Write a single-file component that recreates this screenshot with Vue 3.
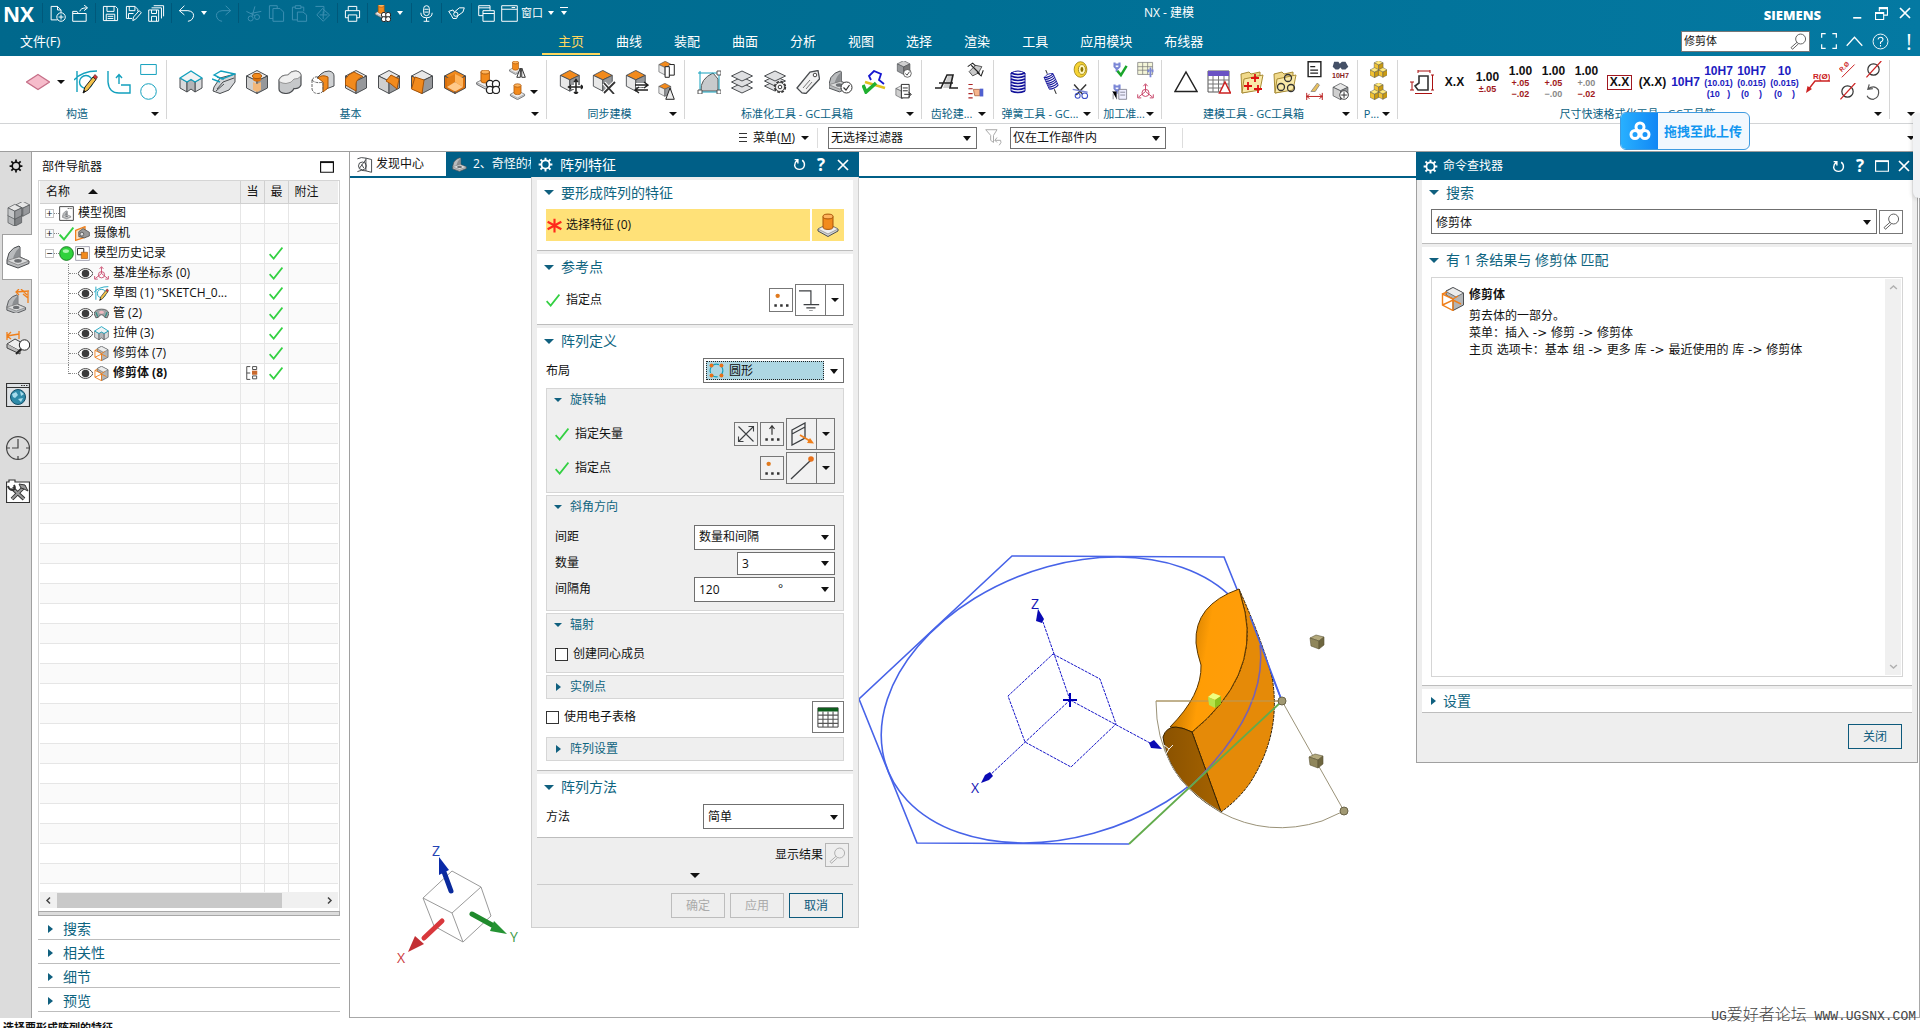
<script setup>
import { h, ref } from 'vue'

const cube = (t, l, r) =>
  `<g stroke="#4a4d50" stroke-width="1" stroke-linejoin="round"><path fill="${t}" d="M12 .5 22.500 6 12 11 1.500 6z"/><path fill="${l}" d="M1.500 6 12 11V23.500L1.500 18z"/><path fill="${r}" d="M22.500 6 12 11V23.500L22.500 18z"/></g>`
const at = (s, x, y, k) => `<g transform="translate(${x} ${y}) scale(${k})">${s}</g>`
const W = '#e8e8e8', L = '#cfcfcf', D = '#96989b', O = '#f28a1c', OD = '#d96f0c'
const orangeTop = cube(O, W, D)
const knob = `<path fill="#d4d5d7" stroke="#4a4d50" d="M12 11 22 16V18L12 23.500 2 18V16z"/><path fill="#eeeeee" stroke="#777" stroke-width=".6" d="M12 11 22 16 12 21 2 16z"/><path fill="${O}" stroke="#a75408" d="M7 3.500V14a5 2.400 0 0 0 10 0V3.500z"/><ellipse cx="12" cy="3.500" rx="5" ry="2.400" fill="#ffb45c" stroke="#a75408"/>`
const rings = (c = '#222', f = '#fff') => `<g fill="${f}" stroke="${c}" stroke-width="1.300"><circle cx="14" cy="14" r="3.600"/><circle cx="20" cy="14" r="3.600"/><circle cx="14" cy="20" r="3.600"/><circle cx="20" cy="20" r="3.600"/></g>`
const pencil = `<path d="M9 23 11 17 19 7 22 9.500 14 20z" fill="#f2c14a" stroke="#222"/><path d="M19 7 21 4.500 23.500 7 22 9.500z" fill="#d33" stroke="#222" stroke-width=".6"/><path d="M9 23 10.200 20 12 21.500z" fill="#111"/>`
const okBadge = `<circle cx="17.500" cy="17.500" r="5.500" fill="#fff" stroke="#333"/><path d="M14.500 17.500 17 20 20.500 15" fill="none" stroke="#333" stroke-width="1.200"/>`
const bracket = `<path fill="#b9bbbd" stroke="#4a4d50" stroke-linejoin="round" d="M1 15 3 8Q7 2 13 1L14 2V12L23 16V18.500L12 23 1 19z"/><path fill="#8b8e91" d="M13.500 2.500V12L7 14.500Q8 7 13.500 2.500z"/><path fill="#dadbdc" stroke="#666" stroke-width=".6" d="M1 15.500 13 12 23 16 12 20z"/><ellipse cx="12" cy="15.800" rx="3.800" ry="1.900" fill="#6d7073"/>`
const stack3 = y => `<path d="M12 ${y} 22.500 ${y + 5} 12 ${y + 10} 1.500 ${y + 5}z" fill="#dfe0e2" stroke="#4a4d50"/>`
const spring = '<g fill="none" stroke="#12129a" stroke-width="1.700">' + [3, 6, 9, 12, 15, 18, 21].map(y => `<path d="M5 ${y}Q12 ${y + 3} 19 ${y}"/>`).join('') + '<path d="M5 3Q12 -1 19 3M5 3V21M19 3V21" stroke-width="1"/></g>'
const cyan = 'fill="none" stroke="#12a0bd" stroke-width="1.400"'
const wire = 'fill="none" stroke="#fff" stroke-width="1.400"'
const dimw = 'fill="none" stroke="#3d90b2" stroke-width="1.400"'
const line = 'fill="none" stroke="#3c3f42" stroke-width="1.300"'
const triad = `<g fill="none" stroke="#c9486b" stroke-width="1.400"><path d="M12 12V2M9 4.500 12 1 15 4.500M12 12 2 20M12 12 22 20M1 16V21H6M23 16V21H18"/><circle cx="12" cy="14" r="5"/></g>`
const trim = `<path d="M12 .5 22.500 6V18L12 23.500V12L5 8V4z" fill="#b3b5b7" stroke="#4a4d50"/><path d="M12 .5 22.500 6 15 10 5 4.500z" fill="#ececec" stroke="#4a4d50" stroke-width=".7"/><path d="M1.500 7 12 12V23.500L1.500 18zM1.500 18 12 13 20 17M12 12 17 9M1.500 7 6 5" fill="none" stroke="#f07f1a" stroke-width="1.400"/>`
const mag = (c = '#555') => `<g fill="none" stroke="${c}" stroke-width="1.300"><circle cx="15" cy="8.500" r="7"/><path d="M10 13 1.500 20.500 3.500 23 12 15.200"/></g>`
const folder = '<path d="M1 4 9 2 11 4 20 2V19L2 23z" fill="#f0d98a" stroke="#a98c36"/><path d="M4 9 23 5 20 20 2 23z" fill="#f9e9a8" stroke="#a98c36"/>'
const yellow = cube('#ffe97a', '#f1c232', '#c99a12')
const clamp = '<path d="M5 2V8L8 11V15M12 2V8L9 11M5 5H12" fill="none" stroke="#7a86d6" stroke-width="3"/>'
const extr = `<path fill="#d9dadc" stroke="#4a4d50" stroke-linejoin="round" d="M1 8 8 12V22L1 18zM23 8 16 12V22L23 18z"/><path fill="#b2b4b7" stroke="#4a4d50" stroke-linejoin="round" d="M8 12 12 9.500 16 12V22L12 19 8 22z"/><path fill="#f2f3f4" stroke="#12a0bd" stroke-width="1.400" stroke-linejoin="round" d="M1 8 12 1 23 8 16 12 12 9.500 8 12z"/>`

const icons = {
  newf: `<path ${wire} d="M12 21H3V2H12L17 7V11M12 2V7H17"/><circle ${wire} cx="17" cy="17" r="6"/><path ${wire} d="M17 13.500V20.500M13.500 17H20.500"/>`,
  open: `<path ${wire} d="M1 9V23H20V12H1M1 9H7L9 12M11 9Q12 4 21 4M17 0 22 4 17 8"/>`,
  save: `<path ${wire} d="M2 2H19L22 5V22H2zM7 2V9H17V2M6 22V13H18V22M8 16H16M8 19H16"/>`,
  saveas: `<path ${wire} d="M2 2H14L18 6V9M2 2V19H10M6 2V8H14V2M5 19V12H12M11 22 12 17 20 8 23 11 15 20z"/>`,
  saveall: `<path ${wire} d="M1 7H15V23H1zM5 7V12H12V7M5 23V16H12V23M5 4H19V19M8 1H22V16"/>`,
  undo: `<path ${wire} stroke-width="2" d="M9 1 2 8 9 14M2 8H14Q22 9 22 15 21 22 14 23"/>`,
  redo: `<path ${dimw} d="M15 1 22 8 15 14M22 8H10Q2 9 2 15 3 22 10 23"/>`,
  cut: `<g ${dimw}><circle cx="8" cy="19" r="3.500"/><circle cx="17" cy="17" r="3.500"/><path d="M10 16 14 2M14 15 2 9M23 9 8 12"/></g>`,
  copy: `<path ${dimw} d="M2 1H13V5M2 1V19H7M7 5H17L22 10V23H7z"/>`,
  paste: `<path ${dimw} d="M6 3H2V21H9M14 3H18V9M6 1H14V5H6zM9 10H17L22 14V23H9z"/>`,
  target: `<path ${dimw} d="M2 2H14V12M12 5 22 14 13 23 4 14zM13 9V20M8 14H19"/>`,
  print: `<path ${wire} stroke-width="2" d="M6 8V2H18V8M2 8H22V18H18M6 18H2V8M6 14H18V23H6z"/>`,
  pattern: at(knob, 0, -2, 0.85) + rings('#111'),
  mic: `<rect ${wire} x="8" y="1" width="8" height="14" rx="4"/><path ${wire} d="M4 11Q4 18 12 18 20 18 20 11M12 18V23M8 23H16M9 6H15M9 10H15"/>`,
  spray: `<path d="M1 9 7 7 9 10 16 4 23 4 21 10 14 15 12 19 7 19 5 15z" ${wire}/><circle cx="11" cy="13" r="3" ${wire}/>`,
  cascade: `<path ${wire} d="M1 1H17V7M1 1V15H7M1 4H17M7 8H23V23H7zM7 12H23"/>`,
  window: `<path ${wire} d="M1 1H23V23H1zM1 6H23M15 3.500H20"/>`,
  plane: '<path d="M12 4.500 23.500 12 12 19.500 .5 12z" fill="#f6bccb" stroke="#c66f88" stroke-width="1.200"/>',
  sketch: `<path ${cyan} d="M3 1V22M0 10Q8 1 23 1"/><circle ${cyan} cx="12" cy="12" r="6.500"/>${pencil}`,
  path: `<path ${cyan} d="M1 1V12Q2 23 12 23H23V15H14M12 14V5M9 8 12 4.500 15 8"/>`,
  rect: `<path ${cyan} d="M1 5H23V19H1z"/>`,
  circle: `<circle ${cyan} cx="12" cy="12" r="11"/>`,
  extrude: extr,
  revolve: `<path d="M2 17 8 8 23 4V12L17 20 8 23.500 1 21z" fill="#d3d5d8" stroke="#4a4d50"/><path d="M5 19 11 12 22 8M4 21 12 14" stroke="#4a4d50" fill="none"/><path ${cyan} d="M2 5 9 1 23 4 10 9zM0 9 8 12M5 7 12 9"/>`,
  hole: cube(W, L, D) + `<path d="M8 6V9.500a4 2 0 0 0 8 0V6" fill="${OD}"/><ellipse cx="12" cy="6" rx="4.500" ry="2.600" fill="${O}" stroke="#a75408"/><path d="M8 12 12 14 16 12V20L12 22 8 20z" fill="#f2b77a"/>`,
  unite: '<path d="M10 5Q13 1 18 1 23 2 23 6V15Q21 19 16 18.500 14 23 8 23.500 1 23 1 19V10Q3 5 10 5z" fill="#c6c8ca" stroke="#4a4d50" stroke-width="1.200"/><path d="M10 5Q13 1 18 1 23 2 23 6 20 9.500 16 9 14 13 8 13.500 1 13 1 10 3 5 10 5z" fill="#f0f0f0" stroke="#777" stroke-width=".7"/>',
  subtract: `<path d="M10 4Q13 1 18 1 23 2 23 6V16L15 19V10L6 8z" fill="#cfd1d3" stroke="#4a4d50"/><path d="M7 8Q11 4 17 7V18L12 22V12z" fill="${O}" stroke="#a75408"/><path d="M1 10V19Q2 23.500 7 23.500 12 23 12 20V12M1 10Q3 6 8 7M1 10Q5 14 12 12" fill="none" stroke="#666" stroke-dasharray="3 1"/>`,
  edge: cube(W, L, D) + `<path d="M1.500 9Q4 4 10 2L19 6.500Q12 9 12 14V21L1.500 15z" fill="${O}" stroke="#a75408"/>`,
  chamfer: cube(W, L, D) + `<path d="M9 11 14 5 22 9 20 19 14 14z" fill="${O}" stroke="#a75408"/>`,
  draft: cube(W, O, D) + `<path d="M5 7 14 10 12 23.500 1.500 19z" fill="${O}" stroke="#a75408"/>`,
  shell: cube(O, OD, OD) + `<path d="M12 4 20 8V17L12 12z" fill="#ffb45c"/><path d="M12 4 4 8V17L12 12z" fill="#e27c14"/><path d="M12 12 20 17 12 21.500 4 17z" fill="#ffc98a"/>`,
  patfeat: at(knob, -1, -1, 0.85) + rings(),
  mirror: at(knob, -1, -1, 0.85) + '<path d="M16 10V23H11zM18 10V23H23z" fill="#fff" stroke="#222" stroke-width="1.300"/>',
  knob,
  moveface: at(orangeTop, 0, 0, 0.9) + '<path d="M17 10V24M10 17H24" stroke="#fff" stroke-width="4"/><path d="M17 10V24M10 17H24M15 12 17 9.500 19 12M15 22 17 24 19 22M12 15 9.500 17 12 19M22 15 24 17 22 19" stroke="#222" stroke-width="1.500" fill="none"/>',
  delface: at(orangeTop, 0, 0, 0.9) + '<path d="M12 13 22 24M23 12 12 23" stroke="#fff" stroke-width="4"/><path d="M12 13 22 24M23 12 12 23" stroke="#333" stroke-width="1.800" fill="none"/>',
  replace: at(orangeTop, 0, 0, 0.9) + '<path d="M11 15H22M11 20H22" stroke="#fff" stroke-width="4"/><path d="M10 15H22M19 12 23 15 19 18M23 20H11M14 17 10 20 14 23" stroke="#222" stroke-width="1.400" fill="none"/>',
  copyface: at(orangeTop, 0, 0, 0.85) + '<path d="M10 8H16V23H10zM16 5H23V20H16" fill="#fff" stroke="#222" stroke-width="1.400"/>',
  resize: at(orangeTop, 0, 0, 0.8) + '<path d="M17 7 23 23H11z" fill="#eee" stroke="#222" stroke-width="1.400"/>',
  std1: '<path d="M4 21Q3 9 16 3L21 9V21z" fill="#c8cacc" stroke="#555"/><path d="M1 3H22M3 1V22H22V3" stroke="#12a0bd" fill="none"/><path d="M1 20H5V24H1zM20 20H24V24H20zM20 1H24V5H20z" fill="#fff" stroke="#555"/>',
  layers: stack3(13) + stack3(7) + stack3(1),
  layerset: stack3(11) + stack3(6) + stack3(1) + '<circle cx="17" cy="17" r="5" fill="#eee" stroke="#333" stroke-width="2.400" stroke-dasharray="2.500 1.400"/><circle cx="17" cy="17" r="4.500" fill="#f4f4f4" stroke="#333" stroke-width=".8"/><circle cx="17" cy="17" r="1.800" fill="#fff" stroke="#333"/>',
  tag: '<path d="M1 18 14 2 22 .5 23.500 9 10 23.500 6 23z" fill="#f2f2f2" stroke="#4a4d50" stroke-width="1.300"/><circle cx="19" cy="5" r="1.800" fill="#fff" stroke="#444"/><path d="M7 18 14 10M10 19 16 12" stroke="#777"/>',
  partok: at(bracket, -1, 0, 0.95) + okBadge,
  stamp: '<path d="M9 10 7 6 12 1 19 4 17 10 22 14" fill="none" stroke="#1515d0" stroke-width="1.800"/><path d="M3 12 23 18" stroke="#e0c020" stroke-width="2.500"/><path d="M1 15 4 22 14 13" fill="none" stroke="#20b030" stroke-width="3.500"/>',
  modelok: at(cube(L, D, '#777'), 2, -1, 0.85) + okBadge,
  modelout: at(cube(W, L, D), 0, 3, 0.8) + '<path d="M9 2H20V21H9z" fill="#fff" stroke="#222" stroke-width="1.300"/><path d="M11 7H18M11 11H18M13 16H22M19 13 23 16 19 20" stroke="#222" fill="none" stroke-width="1.300"/>',
  gear: '<path d="M9 18 14 6H19L16 18z" fill="#ccc"/><path d="M1 18H7L13 5H19L16 18H24M5 13H19" fill="none" stroke="#222" stroke-width="1.600"/>',
  gearp: '<path d="M3 15 12 6 21 8 16 17 8 21z" fill="#c9c9c9" stroke="#222"/><path d="M1 8 8 3 12 7M14 16 20 21 23 13M6 6 18 18" fill="none" stroke="#222" stroke-width="1.500"/>',
  gearh: '<path d="M2 2H8M2 8H8M2 15H8M2 21H8" stroke="#a22" stroke-width="1.500"/><path d="M9 9H18V18H11z" fill="#f6b48c" stroke="#a0522d"/><path d="M18 8H23V19H18z" fill="#5060d0"/>',
  spring,
  springt: `<g transform="rotate(-24 12 12)">${at(spring, 4, 3, 0.7)}<path d="M12 3V-1M12 20V25" stroke="#333"/></g>`,
  coil: '<ellipse cx="12" cy="12" rx="9" ry="11" fill="#f6d335" stroke="#8c7200"/><ellipse cx="14" cy="12" rx="5" ry="7" fill="#fff7c0" stroke="#8c7200"/><ellipse cx="14" cy="12" rx="2" ry="3.500" fill="#8c7200"/>',
  scissors: '<path d="M3 2 15 16M20 2 6 17" stroke="#333" stroke-width="2"/><circle cx="18" cy="18" r="4" fill="none" stroke="#3d50c8" stroke-width="1.500"/><circle cx="8" cy="18" r="3.500" fill="none" stroke="#3d50c8" stroke-width="1.500"/><path d="M1 9 22 13" stroke="#7a86d6" stroke-width="2"/>',
  prep1: clamp + '<path d="M9 14 14 20 22 7" fill="none" stroke="#19a52a" stroke-width="3.500"/>',
  prep2: '<path d="M1 2H22V19H1zM1 8H22M1 13H22M8 2V19M15 2V19" fill="#f4f5d8" stroke="#777"/><path d="M16 12V16M19 9V23M22 12V16" stroke="#7a86d6" stroke-width="2.500"/>',
  prep3: clamp + '<path d="M11 9H22V23H11z" fill="#eef" stroke="#667"/><path d="M13 13H20M13 17H20M2 12H8V23M3 15V23" stroke="#667"/>',
  triad,
  tri: '<path d="M12 2 23 21.500H1z" fill="none" stroke="#222" stroke-width="1.500"/>',
  table: '<path d="M1 1H22V22H1z" fill="#fff" stroke="#555"/><path d="M1 1H22V6H1z" fill="#6a52c4"/><path d="M1 10H22M1 14H22M1 18H22M6 6V22M11.500 6V22M17 6V22" stroke="#777"/><path d="M18 12 23.500 23H12.500z" fill="#fff" stroke="#c22" stroke-width="1.500"/>',
  foldplus: folder + '<path d="M15 4V12M11 8H19M8 12V20M4 16H12M18 15V23M14 19H22" stroke="#d11" stroke-width="1.800"/>',
  foldring: folder + '<g fill="none" stroke="#333" stroke-width="1.300"><circle cx="15" cy="8" r="3.500"/><circle cx="8" cy="17" r="3.500"/><circle cx="18" cy="18" r="3.500"/></g>',
  note: '<path d="M3 1H21V22H3z" fill="#fff" stroke="#222" stroke-width="2"/><path d="M6 8H13M6 13H17M6 17H17" stroke="#222" stroke-width="1.800"/>',
  binoc: '<path d="M3 1H9L11 4 14 1H19L23 8 19 12H14L12 9 9 12H5L1 8z" fill="#445066"/><text x="0" y="24" font-family="Liberation Sans,sans-serif" font-size="10" font-weight="700" fill="#822">10H7</text>',
  brush: '<path d="M16 0 19 3 13 12H7z" fill="#e8c060" stroke="#777"/><path d="M1 14V24M23 14V24M1 19H23M5 16 1 19 5 22M19 16 23 19 19 22" stroke="#b22" fill="none" stroke-width="1.400"/>',
  cubeplus: cube(W, L, D) + '<circle cx="17" cy="17" r="6" fill="#fff" stroke="#333" stroke-width="1.300"/><path d="M17 13V21M13 17H21" stroke="#333" stroke-width="1.400"/>',
  ycubes: at(yellow, 5, -1, 0.6) + at(yellow, -1, 9, 0.62) + at(yellow, 11, 9, 0.6),
  dims: '<path d="M9 6H18V20H8L5 16 9 13z" fill="none" stroke="#333" stroke-width="1.600"/><path d="M8 1H20M8 -1V3M20 -1V3M22.500 5V20M21 5H24M21 20H24M2 12V20M0 12H4M0 20H4M5 23.500H22" stroke="#a11" fill="none"/>',
  leader: '<text x="7" y="9" font-family="Liberation Sans,sans-serif" font-size="8" font-weight="700" fill="#c22">R(Ø)</text><path d="M24 11H9L2 20" fill="none" stroke="#c22" stroke-width="1.400"/><path d="M0 23 1.500 16 6 19z" fill="#c22"/>',
  rleader: '<text transform="rotate(-45 9 15)" x="5" y="12" font-family="Liberation Sans,sans-serif" font-size="9" font-weight="700" fill="#c22">R.Ø</text><path d="M4 23 22 5" stroke="#c22" stroke-width="1.400"/>',
  dia: '<circle cx="12" cy="12" r="8" fill="none" stroke="#333" stroke-width="1.700"/><path d="M2 23 23 0" stroke="#c22" stroke-width="1.700"/>',
  undoc: '<path d="M6 2 4 9 11 8M4 8Q14 2 19 10 21 20 12 23 5 23 3 18" fill="none" stroke="#555" stroke-width="1.700"/>',
  funnel: '<path d="M1 1H17L12 9V19L8 16V9zM14 16H22Q24 19 20 23M17 12 14 16 17 19" fill="none" stroke="#aaa" stroke-width="1.400"/>',
  cog: '<circle cx="12" cy="12" r="6.500" fill="none" stroke="currentColor" stroke-width="2.800"/><path d="M12 1V5.500M12 18.500V23M1 12H5.500M18.500 12H23M4 4 7.500 7.500M16.500 16.500 20 20M20 4 16.500 7.500M4 20 7.500 16.500" stroke="currentColor" stroke-width="3"/>',
  asm: at(cube('#e6e6e6', '#c4c6c8', D), 9, -1, 0.65) + at(cube('#e0e0e0', '#b4b6b8', '#808285'), 1, 9, 0.65) + at(cube('#e6e6e6', '#c4c6c8', D), 1, 2, 0.65),
  bracket,
  pmi: at(bracket, 0, 5, 0.85) + '<path d="M10 3 23 2M13 0 10 3 13 6M22 2V14M17 5 22 9M15 0 21 6" stroke="#f07f1a" fill="none" stroke-width="1.300"/>',
  measure: '<path d="M1 13 9 8 22 15 14 20z" fill="#eee" stroke="#444"/><path d="M1 13V17L14 23V20" fill="#bbb" stroke="#444"/><path d="M1 9V1M1 5 13 3M5 1 1 5 5 8M13 0V8" stroke="#f07f1a" fill="none" stroke-width="1.300"/><circle cx="18.500" cy="14" r="5.200" fill="#fff" stroke="#222"/><path d="M15 18 10 23" stroke="#222" stroke-width="2"/>',
  web: '<path d="M.5 .5H23.500V23.500H.5z" fill="#dfe3e6" stroke="#333" stroke-width="1.200"/><path d="M1 4.500H23" stroke="#333"/><path d="M15 2.500H22" stroke="#333" stroke-dasharray="1.500 1"/><circle cx="12" cy="14" r="7.500" fill="#2e8aa8" stroke="#145069"/><path d="M6 11 10 9 12 12 9 15 7 14zM14 8 18 11 15 13zM12 16 17 15 15 19z" fill="#a8dcec"/>',
  clock: '<circle cx="12" cy="12" r="11.400" fill="none" stroke="#444" stroke-width="1.200"/><path d="M12 3V12H6M12 20V23M20 12H23M1 12H4" fill="none" stroke="#444" stroke-width="1.200"/>',
  tools: '<path d="M.5 3H3V1H9V3H23.500V23.500H.5z" fill="#fff" stroke="#333" stroke-width="1.200"/><path d="M6 9 18 20M18 8 6 20" stroke="#333" stroke-width="3.800"/><path d="M6 9 18 20M18 8 6 20" stroke="#999" stroke-width="1.800"/><path d="M13 5 19 6 22 12 18 10 15 9z" fill="#999" stroke="#333"/><path d="M2 7Q3 11 7 11 10 10 8 6" fill="none" stroke="#333" stroke-width="2"/>',
  mv: `<path d="M1 1H23V23H1z" fill="#fff" stroke="#333" stroke-width="1.400"/><path d="M14 4H21" stroke="#333" stroke-dasharray="1.500 1.500" stroke-width="1.500"/>${at(bracket, 5, 7, 0.6)}`,
  camera: '<path d="M1 7 16 1V18L1 23z" fill="#fbe1c4" stroke="#f07f1a" stroke-width="2"/><path d="M6 9 13 4 23 10V16L15 19 6 17z" fill="#999" stroke="#333"/><circle cx="11" cy="13" r="3" fill="#ddd" stroke="#333"/>',
  history: '<path d="M1 1H23V23H1z" fill="#fff" stroke="#889" stroke-width="1.200"/><path d="M4 4H14V14H4z" fill="#fff" stroke="#333" stroke-width="1.600"/><path d="M10 10H20V20H10z" fill="#f28a1c" stroke="#a75408"/>',
  ball: '<circle cx="12" cy="12" r="11" fill="#2fd23c" stroke="#147a1e" stroke-width="1.500"/><ellipse cx="11" cy="8" rx="5" ry="3" fill="#a9f5ad"/>',
  eye: '<path d="M0 12C5 1.500 19 1.500 24 12 19 22.500 5 22.500 0 12z" fill="#fff" stroke="#444" stroke-width="1.600"/><circle cx="12" cy="12" r="6" fill="#3b3b3b"/>',
  tube: '<path d="M0 12Q2 5 12 5 22 5 24 12L21 19Q16 19 15 15 12 13 9 15 8 19 3 19z" fill="#a0a4a6" stroke="#444" stroke-width="1.200"/><ellipse cx="12" cy="10" rx="4" ry="2.500" fill="#f0b9c0"/><path d="M3 10 6 17M21 10 18 17" stroke="#2f8f86" stroke-width="2"/>',
  trim,
  check: '<path d="M1 14 8 21.500 23 2.500" fill="none" stroke="#33d042" stroke-width="3"/>',
  cur: '<path d="M3 1H9M3 1V23H9M3 12H9M13 1H20V6H13zM13 17H20V22H13z" fill="none" stroke="#444" stroke-width="1.600"/><path d="M12 8H21V15H12z" fill="#c8682c"/>',
  disc: `<path ${line} d="M2 4Q7 1 14 3L22 5V23L14 21Q7 19 2 22M14 3V21"/><circle ${line} cx="9" cy="14" r="5.500"/><path ${line} d="M5 17 14 5M8 12 11 17"/>`,
  reset: '<path d="M3 3H9V10M17 4Q22 8 21 14 19 21 12 21 5 21 3 14 3 8 8 4" fill="none" stroke="currentColor" stroke-width="2.600"/>',
  star: '<path d="M12 1V23M1 6 23 18M23 6 1 18" stroke="#ff2a1c" stroke-width="3.400"/>',
  ptdots: '<circle cx="8" cy="7" r="2.600" fill="#e07a1e"/><path d="M4 17H7V20H4zM11 17H14V20H11zM18 17H21V20H18z" fill="#333"/>',
  vecdots: '<path d="M12 13V3M9 6 12 2 15 6" fill="none" stroke="#333" stroke-width="1.400"/><path d="M4 17H7V20H4zM11 17H14V20H11zM18 17H21V20H18z" fill="#333"/>',
  ground: `<path ${line} d="M0 2H13V17M5 17H22M8 20.500H18M11 24H15"/>`,
  flip: `<path ${line} d="M3 3 21 21M21 3 3 21M15 3H21V9M3 15V21H9"/>`,
  facevec: `<path ${line} d="M2 8 15 1V16L2 23zM2 12 15 5"/><path d="M10 13 20 19" stroke="#f07f1a" stroke-width="1.800"/><path d="M24 21.500 17 21 20 16z" fill="#f07f1a"/>`,
  endpt: `<path ${line} d="M1 23 21 4"/><circle cx="21" cy="3" r="2.800" fill="#e8711a"/>`,
  circ: '<circle cx="12" cy="12" r="9" fill="none" stroke="#12a0bd" stroke-width="1.600" stroke-dasharray="9 3"/><g fill="#e8711a"><circle cx="5" cy="5" r="2.800"/><circle cx="19" cy="5" r="2.800"/><circle cx="5" cy="19" r="2.800"/><circle cx="19" cy="19" r="2.800"/></g>',
  sheet: '<path d="M1 2H23V23H1z" fill="#fff" stroke="#333"/><path d="M1 2H23V6H1z" fill="#0d5c1c"/><path d="M1 10H23M1 14.500H23M1 19H23M6.500 6V23M12 6V23M17.500 6V23" stroke="#555" stroke-width="1.200"/>',
  mag: mag(),
  magoff: mag('#aaa'),
  help: '<circle cx="12" cy="12" r="10.500" fill="none" stroke="#fff" stroke-width="1.300"/><path d="M8.500 9Q9 6 12 6 15.500 6 15.500 9 15.500 11 12 13V15.500M12 17V19" fill="none" stroke="#fff" stroke-width="1.500"/>',
  full: '<path d="M1 7V1H7M17 1H23V7M23 17V23H17M7 23H1V17" fill="none" stroke="#fff" stroke-width="1.800"/>',
  up: '<path d="M1 18 12 6 23 18" fill="none" stroke="#fff" stroke-width="1.800"/>',
  min: '<path d="M4 20H19" stroke="#fff" stroke-width="3"/>',
  restore: '<path d="M1 10H16V23H1zM1 12H16M8 8V1H23V15H17M8 3H23" fill="none" stroke="#fff" stroke-width="2"/>',
  max: '<path d="M1 3H23V21H1z" fill="none" stroke="currentColor" stroke-width="2"/><path d="M1 4H23" stroke="currentColor" stroke-width="2.500"/>',
  close: '<path d="M2 2 22 22M22 2 2 22" fill="none" stroke="currentColor" stroke-width="3.400"/>',
  left: '<path d="M16 4 8 12 16 20" fill="none" stroke="#444" stroke-width="4"/>',
  right: '<path d="M8 4 16 12 8 20" fill="none" stroke="#444" stroke-width="4"/>',
  chevup: '<path d="M3 16 12 8 21 16" fill="none" stroke="#b0b0b0" stroke-width="4"/>',
  chevdn: '<path d="M3 8 12 16 21 8" fill="none" stroke="#b0b0b0" stroke-width="4"/>',
  cloud: '<g fill="none" stroke="#fff" stroke-width="3"><circle cx="12" cy="8" r="4"/><circle cx="7" cy="15.500" r="4"/><circle cx="17" cy="15.500" r="4"/></g>',
}

const Icon = p => h('svg', { viewBox: '0 0 24 24', width: p.s || 24, height: p.s || 24, innerHTML: icons[p.n], 'aria-hidden': 'true', class: 'icon' })
Icon.props = ['n', 's']

const quick = [
  ['newf', 'open'], ['save', 'saveas', 'saveall'], ['undo', '>', 'redo'],
  ['cut', 'copy', 'paste', 'target'], ['print'], ['pattern', '>'], ['mic'], ['spray'], ['cascade', 'window'],
]
const tabs = ['主页', '曲线', '装配', '曲面', '分析', '视图', '选择', '渲染', '工具', '应用模块', '布线器']
const i = (n, w = 33) => ({ n, w })
const st = (a, b, w = 26) => ({ st: [a, b], w })
const tx = (t, ...sub) => ({ t, sub, w: 33 })
const groups = [
  { label: '构造', w: 167, items: [{ w: 15 }, i('plane', 32), { caret: 1, w: 14 }, i('sketch', 36), i('path', 30), st('rect', 'circle', 28)] },
  { label: '基本', w: 380, items: [...['extrude', 'revolve', 'hole', 'unite', 'subtract', 'edge', 'chamfer', 'draft', 'shell', 'patfeat'].map(n => i(n)), st('mirror', 'knob'), { caret: 1, w: 8, low: 1 }] },
  { label: '同步建模', w: 138, items: [i('moveface'), i('delface'), i('replace'), st('copyface', 'resize')] },
  { label: '标准化工具 - GC工具箱', w: 237, items: [...['std1', 'layers', 'layerset', 'tag', 'partok', 'stamp'].map(n => i(n)), st('modelok', 'modelout')] },
  { label: '齿轮建...', w: 72, items: [i('gear'), st('gearp', 'gearh')] },
  { label: '弹簧工具 - GC...', w: 105, items: [i('spring'), i('springt'), st('coil', 'scissors')] },
  { label: '加工准...', w: 63, items: [st('prep1', 'prep3'), st('prep2', 'triad')] },
  { label: '建模工具 - GC工具箱', w: 196, items: [i('tri'), i('table'), i('foldplus'), i('foldring'), st('note', 'brush'), st('binoc', 'cubeplus')] },
  { label: 'P...', w: 40, items: [st('ycubes', 'ycubes')] },
  {
    label: '尺寸快速格式化工具 - GC工具箱', w: 492, items: [i('dims'),
      { t: 'X.X', w: 33, c: 'xx' },
      tx('1.00', ['r', '±.05']), tx('1.00', ['r', '+.05'], ['r', '−.02']), tx('1.00', ['r', '+.05'], ['g', '−.00']), tx('1.00', ['g', '+.00'], ['r', '−.02']),
      { t: 'X.X', w: 33, c: 'xx boxed' }, { t: '(X.X)', w: 33, c: 'xx' }, { t: '10H7', w: 33, c: 'blue' },
      { ...tx('10H7', ['b', '(10.01)'], ['b', '(10   )']), c: 'blue' }, { ...tx('10H7', ['b', '(0.015)'], ['b', '(0    )']), c: 'blue' }, { ...tx('10', ['b', '(0.015)'], ['b', '(0    )']), c: 'blue' },
      i('leader'), st('rleader', 'dia'), st('dia', 'undoc')],
  },
]
const rail = [['cog', 'r0'], ['asm', 'r1'], ['bracket', 'on'], ['pmi', 'r3'], ['measure', 'r4'], ['web', 'r5'], ['clock', 'r6'], ['tools', 'r7']]
const tree = [
  { top: '+', ic: ['mv'], t: '模型视图' },
  { top: '+', ic: ['check', 'camera'], t: '摄像机' },
  { top: '−', ic: ['ball', 'history'], t: '模型历史记录', ok: 1 },
  { ic: ['eye', 'triad'], t: '基准坐标系 (0)', ok: 1 },
  { ic: ['eye', 'sketch'], t: '草图 (1) "SKETCH_0...', ok: 1 },
  { ic: ['eye', 'tube'], t: '管 (2)', ok: 1 },
  { ic: ['eye', 'extrude'], t: '拉伸 (3)', ok: 1 },
  { ic: ['eye', 'trim'], t: '修剪体 (7)', ok: 1 },
  { ic: ['eye', 'trim'], t: '修剪体 (8)', ok: 1, last: 1 },
]
const blanks = 26
const drawers = ['搜索', '相关性', '细节', '预览']
const query = ref('修剪体')
const query2 = ref('修剪体')
const count = ref('3')
const angle = ref('120')
</script>

<template>
  <div class="app">
    <header class="top">
      <div class="titlebar">
        <span class="nx">NX</span>
        <template v-for="(g, gi) in quick" :key="gi">
          <i class="vsep"></i>
          <template v-for="n in g" :key="n">
            <i v-if="n === '>'" class="caret lite"></i>
            <button v-else class="qb" :aria-label="n"><Icon :n="n" s="17" /></button>
          </template>
        </template>
        <button class="win">窗口</button><i class="caret lite wide-l"></i><i class="caret lite bar"></i>
        <span class="apptitle">NX - 建模</span>
        <span class="siemens">SIEMENS</span>
        <button class="wb" aria-label="最小化"><Icon n="min" s="13" /></button>
        <button class="wb" aria-label="还原"><Icon n="restore" s="13" /></button>
        <button class="wb" aria-label="关闭"><Icon n="close" s="12" /></button>
      </div>
      <nav class="tabs">
        <a href="#" class="file">文件(F)</a>
        <a v-for="(t, k) in tabs" :key="t" href="#" class="tab" :class="{ on: k === 0 }">{{ t }}</a>
        <span class="grow"></span>
        <label class="find"><input v-model="query" aria-label="查找命令" /><Icon n="mag" s="17" /></label>
        <button class="tb" aria-label="全屏"><Icon n="full" s="16" /></button>
        <button class="tb" aria-label="收起"><Icon n="up" s="17" /></button>
        <button class="tb" aria-label="帮助"><Icon n="help" s="17" /></button>
        <button class="tb bang">!</button>
      </nav>
    </header>

    <section class="ribbon">
      <div v-for="g in groups" :key="g.label" class="group" :style="{ width: g.w + 'px' }">
        <div class="items">
          <div v-for="(it, k) in g.items" :key="k" class="cell" :style="{ width: it.w + 'px' }" :class="{ low: it.low }">
            <button v-if="it.n" class="plain" :aria-label="it.n"><Icon :n="it.n" /></button>
            <div v-else-if="it.st" class="stack">
              <button v-for="n in it.st" :key="n" class="plain small" :aria-label="n"><Icon :n="n" s="17" /></button>
            </div>
            <i v-else-if="it.caret" class="caret"></i>
            <button v-else-if="it.t" class="plain dim" :class="it.c">
              <b>{{ it.t }}</b><span v-for="(s, q) in it.sub" :key="q" :class="s[0]">{{ s[1] }}</span>
            </button>
          </div>
        </div>
        <div class="glabel"><span>{{ g.label }}</span><i class="caret"></i></div>
      </div>
      <div class="more"><i class="caret"></i></div>
    </section>

    <section class="selbar">
      <button class="menu"><span class="burger"></span>菜单(<u>M</u>)<i class="caret"></i></button>
      <i class="vline"></i>
      <span class="sel f1"><select aria-label="选择过滤器"><option>无选择过滤器</option></select></span>
      <Icon n="funnel" s="17" />
      <span class="sel f2"><select aria-label="选择范围"><option>仅在工作部件内</option></select></span>
      <i class="vline"></i>
      <span class="grow"></span><i class="caret"></i>
    </section>

    <main class="body">
      <aside class="rail">
        <button v-for="r in rail" :key="r[0]" :class="r[1]" :aria-label="r[0]"><Icon :n="r[0]" :s="r[0] === 'cog' ? 14 : 24" /></button>
      </aside>

      <aside class="nav">
        <div class="navhead"><h2>部件导航器</h2><button class="plain" aria-label="最大化"><Icon n="max" s="14" /></button></div>
        <div class="navbox">
          <div class="rows">
            <table>
              <colgroup><col /><col class="c2" /><col class="c2" /><col class="c4" /></colgroup>
              <thead><tr><th class="name">名称<i class="tri-up"></i></th><th>当</th><th>最</th><th>附注</th></tr></thead>
              <tbody>
                <tr v-for="r in tree" :key="r.t">
                  <td>
                    <div class="node" :class="{ last: r.last }">
                      <template v-if="r.top"><span class="pm">{{ r.top }}</span><span class="dots"></span></template>
                      <span v-else class="guide"></span>
                      <Icon v-for="n in r.ic" :key="n" :n="n" s="15" />
                      <span class="nt">{{ r.t }}</span>
                    </div>
                  </td>
                  <td class="mid"><Icon v-if="r.last" n="cur" s="14" /></td>
                  <td class="mid"><Icon v-if="r.ok" n="check" s="14" /></td>
                  <td></td>
                </tr>
                <tr v-for="n in blanks" :key="'b' + n"><td></td><td></td><td></td><td></td></tr>
              </tbody>
            </table>
          </div>
          <div class="hscroll"><Icon n="left" s="9" /><span class="thumb"></span><Icon n="right" s="9" /></div>
        </div>
        <div class="split"></div>
        <button v-for="d in drawers" :key="d" class="drawer"><i class="tr"></i>{{ d }}</button>
      </aside>

      <section class="work">
        <div class="doctabs">
          <button class="doc first"><Icon n="disc" s="17" />发现中心</button>
          <button class="doc second"><Icon n="bracket" s="15" />2、奇怪的材</button>
        </div>
        <svg class="scene" viewBox="350 178 1570 840" width="1570" height="840">
          <defs>
            <linearGradient id="tube" x1="0" x2="1" y1="0" y2="0.3"><stop offset="0" stop-color="#e08a00" /><stop offset=".25" stop-color="#c87800" /><stop offset=".55" stop-color="#ff9d05" /><stop offset="1" stop-color="#ff9d0a" /></linearGradient>
            <linearGradient id="cap" x1="0" x2="1"><stop offset="0" stop-color="#8a5200" /><stop offset="1" stop-color="#a66300" /></linearGradient>
          </defs>
          <g fill="none" stroke="#4763e8" stroke-width="1.600">
            <path d="M1129 844 917 843 859 699 1012 556 1224 557 1282 701" />
            <circle r=".866" transform="matrix(211.500 1 55.100 -165.100 1070.500 700)" vector-effect="non-scaling-stroke" />
          </g>
          <g fill="none" stroke="#1414c8" stroke-width="1" stroke-dasharray="3 1">
            <path d="M1070 700 1043 622M1070 700 988 777M1070 700 1150 743M1053 654 1100 679 1116 724 1071 767 1025 742 1008 696z" />
          </g>
          <path d="M1070 693V707M1063 700H1077" stroke="#0000b4" stroke-width="2" />
          <g fill="#0a0ab4"><path d="M1038 609 1044 619 1042 623 1036 621z" /><path d="M981 783 985 775 990 772 993 776 989 780z" /><path d="M1162 749 1151 748 1149 743 1154 740z" /></g>
          <g class="axis blue"><text x="1031" y="609">Z</text><text x="971" y="793">X</text></g>
          <path d="M1156 701H1282M1156 701Q1156 775 1220 812 1268 838 1322 821L1344 811 1282 701" fill="none" stroke="#9a9278" />
          <path d="M1239 589Q1262 640 1272 677 1282 733 1250 783 1238 800 1221 812L1192 732Q1258 678 1245 612z" fill="#e58a08" stroke="#2a1c08" stroke-width="1" stroke-dasharray="3 1" />
          <path d="M1239 589Q1194 605 1196 643 1197 653 1201 665 1202 695 1170 727L1182 728 1192 732Q1258 678 1245 612z" fill="url(#tube)" stroke="#5a3700" stroke-width="1" />
          <path d="M1163 737Q1166 727 1176 727 1184 728 1192 732L1221 812Q1168 782 1163 737z" fill="url(#cap)" stroke="#3a2400" stroke-width="1" />
          <path d="M1164 745Q1172 783 1221 812" fill="none" stroke="#b5b1a4" />
          <path d="M1260 645Q1268 712 1190 787" fill="none" stroke="#7a62b0" stroke-width="1.600" />
          <path d="M1250 616 1282 701" stroke="#4763e8" stroke-width="1.600" />
          <path d="M1282 701 1129 844" stroke="#62ab4c" stroke-width="1.800" />
          <path d="M1156 701H1278" stroke="#b59a60" stroke-width="1" />
          <g fill="#a19973" stroke="#6a6347"><circle cx="1282" cy="701" r="4" /><circle cx="1344" cy="811" r="4" /></g>
          <g v-for="(c, k) in [[1317, 642], [1316, 761]]" :key="k" stroke="#5c5638" stroke-width=".6">
            <path :d="`M${c[0] - 7} ${c[1] - 4}l6 -3 8 2 -5 4z`" fill="#b3a97c" /><path :d="`M${c[0] - 7} ${c[1] - 4}l9 3v8l-8 -3z`" fill="#8f865b" /><path :d="`M${c[0] + 2} ${c[1] - 1}l5 -4v8l-5 4z`" fill="#6e663f" />
          </g>
          <path d="M1208 697 1213 693 1221 696 1215 700z" fill="#efff80" /><path d="M1208 697 1215 700V708L1209 705z" fill="#b6e34a" /><path d="M1215 700 1221 696V704L1215 708z" fill="#8cc21e" />
          <path d="M1164 745 1169 749 1173 745M1169 749 1166 754" stroke="#f3f3f3" fill="none" />

          <g fill="none" stroke="#9a9a9a"><path d="M423 898 452 913 481 887 452 871zM423 898 434 926 463 942 452 913M463 942 491 916 481 887" /></g>
          <g stroke-width="5" stroke-linecap="round"><path d="M451 891 444 872" stroke="#0a2a9c" /><path d="M442 921 424 938" stroke="#d8383c" /><path d="M472 914 492 925" stroke="#1f8a2c" /></g>
          <path d="M439 857 449 870 439 875z" fill="#0a2aa8" /><path d="M408 952 415 936 424 944z" fill="#c32f34" /><path d="M507 934 490 931 494 921z" fill="#259334" />
          <g class="axis"><text x="432" y="856" fill="#2343b4">Z</text><text x="397" y="963" fill="#cc3b3f">X</text><text x="510" y="942" fill="#3c9a45">Y</text></g>
        </svg>

        <form class="dlg pattern" @submit.prevent>
          <div class="dh"><Icon n="cog" s="15" /><h2>阵列特征</h2><button class="hb" type="button" aria-label="重置"><Icon n="reset" s="13" /></button><button class="hb q" type="button">?</button><button class="hb" type="button" aria-label="关闭"><Icon n="close" s="12" /></button></div>
          <section class="card s1">
            <h3><i class="td"></i>要形成阵列的特征</h3>
            <div class="pick"><div class="yel"><Icon n="star" s="15" />选择特征 (0)</div><button class="yb" type="button" aria-label="特征"><Icon n="knob" s="24" /></button></div>
          </section>
          <section class="card s2">
            <h3><i class="td"></i>参考点</h3>
            <div class="row r34"><Icon n="check" s="14" /><span class="lb">指定点</span><button class="ib" type="button" aria-label="点对话框"><Icon n="ptdots" s="20" /></button><button class="cb" type="button" aria-label="点类型"><Icon n="ground" s="22" /><span class="ca"><i class="caret"></i></span></button></div>
          </section>
          <section class="card s3">
            <h3><i class="td"></i>阵列定义</h3>
            <div class="row r25"><label class="lb" for="layout">布局</label><span class="sel w141 hot"><Icon n="circ" s="17" /><select id="layout"><option>圆形</option></select></span></div>
            <div class="sub b1">
              <h4><i class="td"></i>旋转轴</h4>
              <div class="row r34"><Icon n="check" s="14" /><span class="lb">指定矢量</span><button class="ib" type="button" aria-label="反向"><Icon n="flip" s="20" /></button><button class="ib" type="button" aria-label="矢量对话框"><Icon n="vecdots" s="20" /></button><button class="cb" type="button" aria-label="矢量类型"><Icon n="facevec" s="24" /><span class="ca"><i class="caret"></i></span></button></div>
              <div class="row r34"><Icon n="check" s="14" /><span class="lb">指定点</span><button class="ib" type="button" aria-label="点对话框"><Icon n="ptdots" s="20" /></button><button class="cb" type="button" aria-label="点类型"><Icon n="endpt" s="24" /><span class="ca"><i class="caret"></i></span></button></div>
            </div>
            <div class="sub b2">
              <h4><i class="td"></i>斜角方向</h4>
              <div class="row r26"><label class="lb" for="space">间距</label><span class="sel w141"><select id="space"><option>数量和间隔</option></select></span></div>
              <div class="row r26"><label class="lb" for="cnt">数量</label><span class="sel w98"><input id="cnt" v-model="count" /></span></div>
              <div class="row r26"><label class="lb" for="ang">间隔角</label><span class="sel w141"><input id="ang" v-model="angle" /><span class="deg">°</span></span></div>
            </div>
            <div class="sub b3">
              <h4><i class="td"></i>辐射</h4>
              <label class="chk"><input type="checkbox" />创建同心成员</label>
            </div>
            <div class="sub thin"><h4><i class="tr"></i>实例点</h4></div>
            <div class="row sheetrow"><label class="chk"><input type="checkbox" />使用电子表格</label><span class="grow"></span><button class="yb sq" type="button" aria-label="电子表格"><Icon n="sheet" s="22" /></button></div>
            <div class="sub thin"><h4><i class="tr"></i>阵列设置</h4></div>
          </section>
          <section class="card s4">
            <h3><i class="td"></i>阵列方法</h3>
            <div class="row r25"><label class="lb" for="method">方法</label><span class="sel w141"><select id="method"><option>简单</option></select></span></div>
          </section>
          <div class="preview">显示结果<button class="ib off" type="button" aria-label="显示结果"><Icon n="magoff" s="17" /></button></div>
          <div class="fold"><i class="caret big"></i></div>
          <div class="acts"><button class="btn" type="button" disabled>确定</button><button class="btn" type="button" disabled>应用</button><button class="btn" type="button">取消</button></div>
        </form>

        <form class="dlg finder" @submit.prevent>
          <div class="dh"><Icon n="cog" s="15" /><h2>命令查找器</h2><button class="hb" type="button" aria-label="重置"><Icon n="reset" s="13" /></button><button class="hb q" type="button">?</button><button class="hb" type="button" aria-label="最大化"><Icon n="max" s="14" /></button><button class="hb" type="button" aria-label="关闭"><Icon n="close" s="12" /></button></div>
          <section class="card f-s1">
            <h3><i class="td"></i>搜索</h3>
            <div class="row r25"><span class="sel wide"><input v-model="query2" aria-label="搜索" /></span><button class="ib" type="button" aria-label="查找"><Icon n="mag" s="17" /></button></div>
          </section>
          <section class="card f-s2">
            <h3><i class="td"></i>有 1 条结果与 修剪体 匹配</h3>
            <div class="list">
              <Icon n="trim" s="24" />
              <div class="res"><h5>修剪体</h5><p>剪去体的一部分。</p><p>菜单：插入 -> 修剪 -> 修剪体</p><p>主页 选项卡：基本 组 -> 更多 库 -> 最近使用的 库 -> 修剪体</p></div>
              <div class="vscroll"><Icon n="chevup" s="9" /><Icon n="chevdn" s="9" /></div>
            </div>
          </section>
          <section class="card f-s3"><h3><i class="tr"></i>设置</h3></section>
          <div class="acts"><button class="btn" type="button">关闭</button></div>
        </form>
      </section>
    </main>
    <footer class="status">选择要形成阵列的特征</footer>
    <div class="edge"></div>
    <button class="upload"><span class="cl"><Icon n="cloud" s="24" /></span>拖拽至此上传</button>
    <div class="mark"><span>UG</span>爱好者论坛<span> WWW.UGSNX.COM</span></div>
  </div>
</template>

<style>
body { margin: 0; overflow: hidden; }
</style>
<style scoped>
* { box-sizing: border-box; }
.app { position: relative; display: flex; flex-direction: column; height: 100vh; overflow: hidden; background: #fff; color: #111; font: 12px/16px "Open Sans", "Noto Sans CJK SC", sans-serif; }
button, input, select { font: inherit; color: inherit; background: none; border: 0; padding: 0; margin: 0; border-radius: 0; outline: 0; }
h2, h3, h4, h5, p { margin: 0; font-weight: 400; }
a { text-decoration: none; color: inherit; }
.icon { display: block; flex: none; }
.grow { flex: 1; }
.plain { display: flex; align-items: center; justify-content: center; }
.caret { flex: none; width: 0; height: 0; border: 4px solid transparent; border-top-color: #111; border-bottom: 0; }
.caret.big { border-width: 5px; border-bottom: 0; }
.caret.lite { border-width: 3px; border-bottom: 0; border-top: 4px solid #fff; margin: 0 5px 0 3px; }
.caret.wide-l { margin-left: 5px; }
.caret.bar { position: relative; margin-left: 2px; }
.caret.bar::before { content: ""; position: absolute; left: -4px; top: -8px; width: 8px; height: 1px; background: #fff; }
.td { flex: none; width: 0; height: 0; border: 5px solid transparent; border-top-color: #10607f; border-bottom: 0; }
.tr { flex: none; width: 0; height: 0; border: 4px solid transparent; border-left: 5px solid #10607f; border-right: 0; }

.top { flex: none; color: #fff; background: linear-gradient(90deg, #00688c, #006f94 50%, #0479a2); }
.titlebar { position: relative; display: flex; align-items: center; height: 26px; padding: 0 7px 0 3px; }
.nx { font-size: 21px; line-height: 26px; font-weight: 700; width: 36px; padding-top: 2px; }
.vsep { width: 1px; height: 20px; background: #00587a; margin: 0 3px; }
.qb { width: 19px; height: 20px; display: flex; align-items: center; justify-content: center; margin: 0 2px; }
.win { font-size: 11px; }
.apptitle { position: absolute; left: 0; right: 0; text-align: center; padding-left: 418px; pointer-events: none; }
.siemens { margin-left: auto; font: 800 13px/16px "Open Sans", sans-serif; margin-right: 20px; padding-top: 3px; }
.wb { width: 16px; height: 16px; display: flex; align-items: center; justify-content: center; margin-left: 8px; }
.tabs { display: flex; align-items: center; height: 30px; font-size: 13px; padding-right: 6px; }
.file { width: 542px; padding-left: 20px; }
.tab { height: 28px; line-height: 28px; padding: 0 16px; border-bottom: 2px solid transparent; }
.tab.on { color: #ffd75e; border-color: #ffd75e; }
.find { display: flex; align-items: center; width: 129px; height: 21px; background: #fff; border: 1px solid #777; padding: 0 2px; color: #111; margin-right: 10px; }
.find input { flex: 1; min-width: 0; font-size: 11px; }
.tb { display: flex; align-items: center; justify-content: center; width: 17px; height: 20px; margin-right: 9px; }
.bang { width: 10px; margin: 0 0 0 6px; font-size: 22px; }

.ribbon { flex: none; display: flex; height: 68px; background: #fff; border-bottom: 1px solid #d2d4d6; overflow: hidden; }
.group { flex: none; display: flex; flex-direction: column; padding-top: 2px; position: relative; }
.group::after { content: ""; position: absolute; right: 0; top: 4px; bottom: 4px; width: 1px; background: #d6d6d6; }
.items { display: flex; height: 48px; padding-left: 7px; }
.cell { flex: none; display: flex; justify-content: center; align-items: center; }
.cell.low { align-items: flex-end; padding-bottom: 12px; }
.stack { height: 48px; }
.small { height: 22px; }
.glabel { display: flex; align-items: center; height: 16px; font-size: 11px; color: #0a6183; padding: 0 8px 0 3px; white-space: nowrap; }
.glabel span { flex: 1; text-align: center; min-width: 0; }
.dim { flex-direction: column; font: 700 9px/11px "Liberation Sans", sans-serif; width: 33px; height: 35px; white-space: pre; }
.dim b { font-size: 12px; line-height: 14px; }
.dim .r { color: #a01820; }
.dim .g { color: #888; }
.blue { color: #1c1cc0; }
.boxed { width: 25px; height: 15px; border: 1px solid #a01820; }
.more { flex: 1; display: flex; justify-content: flex-end; align-items: flex-end; padding: 0 5px 7px 0; }

.selbar { flex: none; display: flex; align-items: center; height: 28px; border-bottom: 1px solid #9d9d9d; padding: 0 5px 0 739px; }
.menu { display: flex; align-items: center; width: 70px; white-space: nowrap; }
.menu .caret { margin-left: 6px; }
.burger { width: 11px; height: 9px; border: solid #333; border-width: 1px 0; margin-right: 6px; background: linear-gradient(#333, #333) 0 50% / 100% 1px no-repeat; }
.vline { width: 1px; height: 20px; background: #ddd; margin: 0 10px 0 8px; }
.sel { position: relative; display: flex; align-items: center; height: 25px; background: #fff; border: 1px solid #6f6f6f; }
.sel::after { content: ""; position: absolute; right: 5px; top: 50%; margin-top: -2px; border: 4px solid transparent; border-top: 5px solid #111; border-bottom: 0; pointer-events: none; }
.sel select, .sel input { appearance: none; flex: 1; min-width: 0; height: 100%; padding: 0 16px 0 4px; }
.selbar .sel { height: 22px; margin-right: 8px; }
.selbar .sel select { padding-left: 2px; }
.f1 { width: 149px; }
.f2 { width: 156px; margin-left: 8px; }
.w141 { width: 141px; }
.w98 { width: 98px; height: 23px; }
.wide { flex: 1; }
.hot { padding: 2px; }
.hot::before { content: ""; position: absolute; left: 2px; top: 2px; bottom: 2px; right: 19px; background: #aed7e3; border: 1px dotted #222; }
.hot svg { position: relative; margin-left: 2px; }
.hot select { position: relative; }

.body { flex: 1; min-height: 0; display: flex; }
.rail { flex: none; width: 32px; background: #dcdcdc; border-right: 1px solid #a0a0a0; display: flex; flex-direction: column; }
.rail button { display: flex; align-items: center; justify-content: center; height: 43px; padding-left: 4px; flex: none; }
.rail .r0 { height: 27px; padding: 0; }
.rail .r1 { height: 55px; padding-top: 15px; }
.rail .on { height: 46px; background: #fff; border: 1px solid #a0a0a0; border-right: 0; margin: 0 -1px 0 2px; padding-left: 0; }
.rail .r3, .rail .r4 { height: 42px; }
.rail .r5 { margin-top: 9px; height: 44px; }
.rail .r6 { margin-top: 9px; }
.nav { flex: none; width: 318px; border-right: 1px solid #a0a0a0; padding: 0 9px 0 6px; display: flex; flex-direction: column; }
.navhead { flex: none; display: flex; align-items: center; justify-content: space-between; height: 28px; padding: 2px 6px 0 4px; }
.navhead h2 { font-size: 12px; line-height: 16px; }
.navbox { flex: 1; min-height: 0; border: 1px solid #d5d5d5; border-bottom: 0; padding: 0 1px 3px; display: flex; flex-direction: column; }
.rows { flex: 1; min-height: 0; overflow: hidden; }
table { width: 100%; table-layout: fixed; border-collapse: collapse; }
.c2 { width: 24px; }
.c4 { width: 50px; }
th { height: 22px; padding: 0 0 0 6px; background: #ededed; font-weight: 400; text-align: left; border: solid #d0d0d0; border-width: 0 1px 1px 0; }
th:last-child, td:last-child { border-right: 0; }
.tri-up { display: inline-block; border: 5px solid transparent; border-top: 0; border-bottom-color: #111; margin-left: 18px; vertical-align: 2px; }
td { height: 20px; padding: 0; border: solid #e6e6e6; border-width: 0 1px 1px 0; }
tbody tr:nth-child(even) td { background: #fafafa; }
.mid svg { margin: 0 auto; }
.node { display: flex; align-items: center; height: 19px; white-space: nowrap; overflow: hidden; }
.pm { flex: none; width: 9px; height: 9px; margin-left: 5px; border: 1px solid #c4c4c4; font-size: 11px; line-height: 6px; text-align: center; }
.dots { flex: none; width: 5px; border-top: 1px dotted #888; }
.node svg { margin-right: 1px; }
.guide { flex: none; position: relative; width: 10px; height: 19px; margin-left: 28px; border-left: 1px dotted #888; }
.guide::after { content: ""; position: absolute; left: 0; top: 9px; width: 8px; border-top: 1px dotted #888; }
.last .guide { height: 10px; align-self: flex-start; }
.last .nt { font-weight: 700; }
.nt { padding-left: 3px; }
.hscroll { flex: none; display: flex; align-items: center; height: 16px; background: #f0f0f0; padding: 0 4px; }
.thumb { width: 225px; height: 15px; background: #c9c9c9; margin: 0 auto 0 4px; }
.split { flex: none; height: 5px; background: #dcdcdc; border: 1px solid #a8a8a8; }
.drawer { flex: none; display: flex; align-items: center; height: 24px; padding: 2px 0 0 10px; gap: 10px; border-bottom: 1px solid #bdbdbd; color: #0e6480; font-size: 14px; text-align: left; }
.drawer:last-child { margin-bottom: 6px; }

.work { flex: 1; min-width: 0; position: relative; overflow: hidden; border: solid #a8a8a8; border-width: 0 1px 1px 0; }
.doctabs { display: flex; height: 26px; border-bottom: 2px solid #005f87; }
.doc { display: flex; align-items: center; gap: 3px; padding-left: 6px; }
.first { width: 96px; }
.second { width: 120px; background: #005f87; color: #fff; gap: 6px; white-space: nowrap; }
.scene { position: absolute; left: 0; top: 26px; }
.axis { font: 14px "Open Sans", sans-serif; }
.axis.blue { fill: #1414b4; }
.dlg { position: absolute; top: 0; background: #eee; border: 1px solid #cfcfcf; border-top: 0; }
.pattern { left: 181px; width: 328px; height: 776px; }
.finder { right: 1px; width: 502px; height: 611px; border-color: #a0a0a0; }
.dh { display: flex; align-items: center; height: 25px; margin: 0 -1px; padding: 0 9px 0 7px; background: #005f87; color: #fff; }
.dh h2 { flex: 1; padding-left: 7px; font-size: 14px; line-height: 20px; }
.finder .dh { height: 28px; padding: 0 7px; }
.finder .dh h2 { font-size: 12px; padding-left: 5px; }
.hb { display: flex; align-items: center; justify-content: center; width: 14px; margin-left: 8px; }
.q { font-size: 17px; font-weight: 700; }
.card { background: #fff; margin: 0 5px; padding: 0 9px; border-bottom: 1px solid #bdbdbd; }
.card h3 { display: flex; align-items: center; height: 26px; gap: 7px; margin-left: -2px; color: #0e6480; font-size: 14px; }
.s1 { margin-top: 3px; height: 71px; }
.s1 h3, .f-s1 h3 { height: 25px; margin-bottom: 1px; }
.pick { display: flex; gap: 2px; margin-top: 4px; }
.yel { flex: 1; display: flex; align-items: center; gap: 4px; height: 32px; padding-left: 1px; background: #ffe178; }
.yb { display: flex; align-items: center; justify-content: center; width: 32px; height: 32px; background: #ffe178; }
.yb.sq { background: #fff; border: 1px solid #777; }
.card.s2 { margin-top: 3px; height: 71px; }
.card.s3 { margin-top: 3px; height: 443px; }
.card.s4 { margin-top: 3px; height: 64px; }
.row { display: flex; align-items: center; }
.r34 { height: 34px; gap: 2px; }
.s2 .r34 { margin-top: 3px; }
.r25 { height: 25px; gap: 2px; margin-top: 4px; }
.r26 { height: 26px; }
.lb { flex: 1; padding-left: 4px; }
.r25 .lb, .r26 .lb { padding-left: 0; }
.ib { display: flex; align-items: center; justify-content: center; width: 24px; height: 24px; border: 1px solid #777; background: #fff; }
.off { border-color: #b5b5b5; background: #eee; }
.cb { display: flex; align-items: center; width: 49px; height: 32px; border: 1px solid #777; background: #fff; padding-left: 3px; }
.b1 .ib, .b1 .cb { background: #f1f1f1; }
.ca { display: flex; align-items: center; justify-content: center; width: 18px; height: 30px; margin-left: auto; border-left: 1px solid #777; }
.sub { background: #efefef; border: 1px solid #d6d6d6; margin-bottom: 2px; padding: 0 8px; }
.sub h4 { display: flex; align-items: center; height: 22px; gap: 8px; color: #0e6480; font-size: 12px; margin-left: -1px; }
.sub .td { border-width: 4px; border-bottom: 0; }
.sub .tr { margin: 0 1px 0 2px; }
.b1 { margin-top: 5px; height: 105px; }
.b1 h4 { margin-bottom: 6px; }
.b2 { height: 116px; }
.b2 h4 { margin-bottom: 6px; }
.b3 { height: 60px; }
.b3 .chk { margin-top: 8px; }
.thin { height: 24px; }
.chk { display: flex; align-items: center; gap: 5px; height: 20px; }
.chk input { appearance: none; width: 13px; height: 13px; border: 1px solid #333; background: #fff; }
.sheetrow { height: 32px; margin: 2px 0 4px; }
.deg { position: absolute; left: 83px; }
.preview { display: flex; align-items: center; justify-content: flex-end; gap: 2px; height: 24px; margin: 5px 9px 0 0; }
.fold { display: flex; justify-content: center; align-items: center; height: 18px; margin: 0 5px; border-bottom: 1px solid #ccc; }
.acts { display: flex; justify-content: flex-end; gap: 5px; padding: 8px 15px 0 0; }
.btn { width: 54px; height: 25px; border: 1px solid #0d5a7c; color: #0d5a7c; }
.btn:disabled { border-color: #bdbdbd; color: #aaa; }
.f-s1 { height: 64px; }
.card.f-s2 { margin-top: 3px; height: 439px; }
.card.f-s3 { margin-top: 3px; height: 24px; }
.f-s3 h3 { height: 24px; padding-left: 2px; }
.list { position: relative; display: flex; height: 400px; margin-top: 4px; border: 1px solid #d5d5d5; padding: 9px 1px 1px 9px; gap: 4px; }
.res { flex: 1; font-family: "DejaVu Sans", "Noto Sans CJK SC", sans-serif; }
.res h5 { font-size: 12px; font-weight: 700; line-height: 17px; margin-bottom: 4px; }
.res p { line-height: 17px; }
.vscroll { width: 16px; margin-top: -8px; padding: 4px 0; background: #f0f0f0; display: flex; flex-direction: column; align-items: center; justify-content: space-between; }
.finder .acts { padding-top: 11px; }

.status { flex: none; height: 10px; overflow: hidden; padding: 2px 0 0 3px; font-size: 11px; font-weight: 700; line-height: 16px; white-space: nowrap; }
.edge { position: absolute; right: 0; top: 113px; width: 7px; height: 85px; background: #f1f2f4; border-radius: 6px 0 0 6px; box-shadow: -1px 1px 4px rgba(0, 0, 0, .15); }
.upload { position: absolute; right: 170px; top: 112px; display: flex; align-items: center; gap: 6px; width: 130px; height: 38px; background: #f1f8fe; border: 1px solid #3f9be0; border-radius: 6px; color: #1296f0; font-size: 13px; font-weight: 700; overflow: hidden; white-space: nowrap; }
.cl { display: flex; align-items: center; justify-content: center; width: 37px; height: 38px; background: linear-gradient(90deg, #28b0ff, #1187f5); }
.mark { position: absolute; right: 4px; bottom: 2px; color: #444; font: 300 16px/18px "Noto Sans CJK SC", sans-serif; white-space: pre; }
.mark span { font: 13px/18px "Liberation Mono", monospace; }
</style>
